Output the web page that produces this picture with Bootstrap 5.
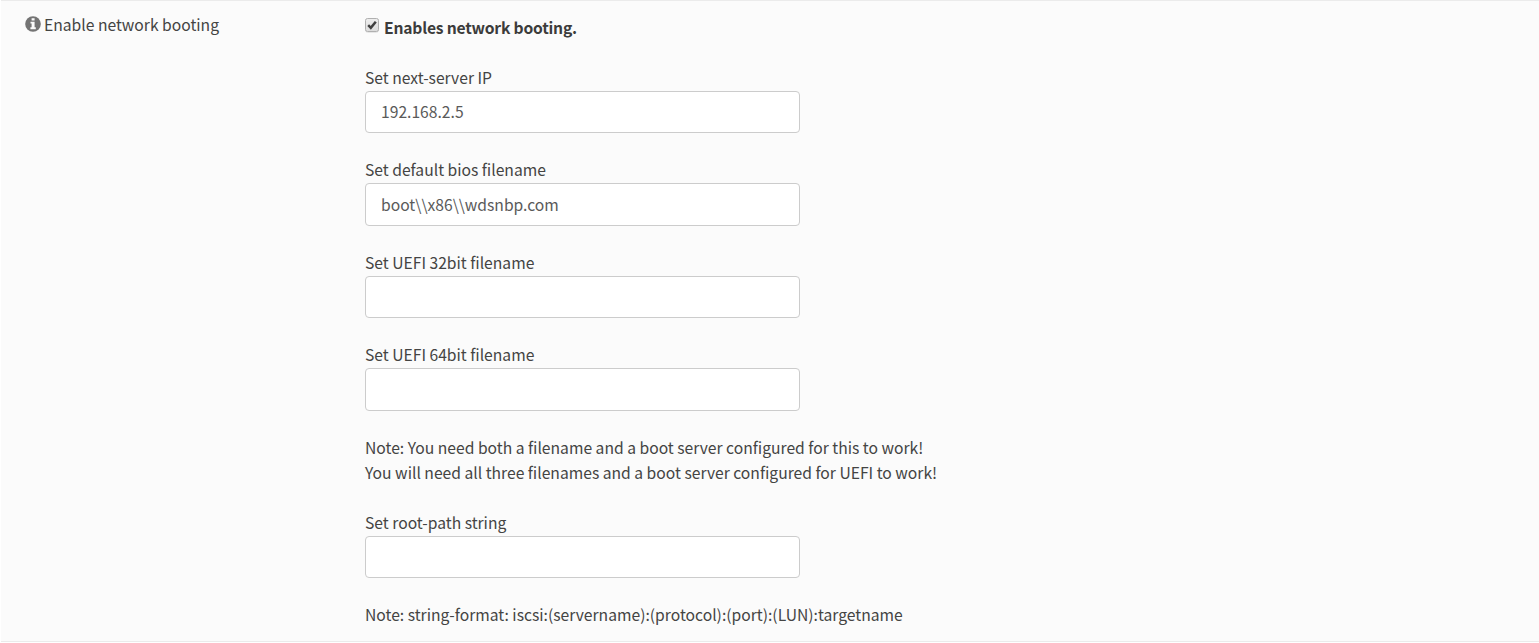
<!DOCTYPE html>
<html lang="en">
<head>
<meta charset="utf-8">
<meta name="viewport" content="width=device-width, initial-scale=1">
<title>Enable network booting</title>
<link href="https://cdn.jsdelivr.net/npm/bootstrap@5.3.0/dist/css/bootstrap.min.css" rel="stylesheet">
<style>
  body { font-family: "Noto Sans CJK SC", sans-serif; font-size: 15.67px; line-height: 25px; color: #444443; background: #fff; }
  .setting { margin-left: 1px; height: 642px; background: #fbfbfb; border-top: 1px solid #ebebeb; border-bottom: 1px solid #ebebeb; }
  .setting-name { width: 364px; padding: 11px 0 0 24px; }
  .setting-name svg { margin: 4px 3px 0 0; }
  .setting-body { padding-top: 14px; }
  .enable-row { height: 25px; margin-bottom: 24.6px; }
  .enable-row strong { letter-spacing: -.21px; color: #3c3c3b; }
  .tick { margin: 3px 5px 0 0; }
  .field { margin-bottom: 23.9px; }
  .field label { padding-bottom: 1.1px; }
  .field .form-control { width: 435px; height: 42.5px; padding: 0 15px; font-size: 15.67px; line-height: 40px; color: #5a5a5a; border: 1px solid #ccc; border-radius: 4px; }
  .notes { margin-bottom: 25px; }
</style>
</head>
<body>
<main class="setting d-flex">
  <div class="setting-name d-flex align-items-start flex-shrink-0">
    <svg class="flex-shrink-0" width="16" height="16" viewBox="0 0 16 16" aria-hidden="true">
      <circle cx="8" cy="8" r="7.8" fill="#747474"/>
      <path fill="#fbfbfb" d="M6.6 2.2h3v2.3h-3zM5.5 5.8h4.1v5.4h1.2v2H5.4v-2h1.2V7.6H5.5z"/>
    </svg>
    <span>Enable network booting</span>
  </div>
  <div class="setting-body">
    <label class="enable-row d-flex align-items-start">
      <svg class="tick flex-shrink-0" width="14" height="15" viewBox="0 0 14 15" aria-hidden="true">
        <defs><linearGradient id="face" x1="0" y1="0" x2="0" y2="1"><stop stop-color="#eee"/><stop offset="1" stop-color="#dcdcdc"/></linearGradient></defs>
        <rect x=".5" y="1" width="13" height="13.3" rx="2" fill="none" stroke="#e2e2e2"/>
        <rect x=".5" y=".5" width="13" height="13" rx="2" fill="url(#face)" stroke="#b0b0b0"/>
        <path d="M3.2 7.2 5.8 9.8 10.8 3.7" fill="none" stroke="#404040" stroke-width="2.5"/>
      </svg>
      <strong>Enables network booting.</strong>
    </label>
    <div class="field"><label class="d-block" for="next">Set next-server IP</label><input id="next" class="form-control" type="text" value="192.168.2.5"></div>
    <div class="field"><label class="d-block" for="bios">Set default bios filename</label><input id="bios" class="form-control" type="text" value="boot\\x86\\wdsnbp.com"></div>
    <div class="field"><label class="d-block" for="u32">Set UEFI 32bit filename</label><input id="u32" class="form-control" type="text"></div>
    <div class="field"><label class="d-block" for="u64">Set UEFI 64bit filename</label><input id="u64" class="form-control" type="text"></div>
    <p class="notes">Note: You need both a filename and a boot server configured for this to work!<br>You will need all three filenames and a boot server configured for UEFI to work!</p>
    <div class="field"><label class="d-block" for="root">Set root-path string</label><input id="root" class="form-control" type="text"></div>
    <p class="mb-0">Note: string-format: iscsi:(servername):(protocol):(port):(LUN):targetname</p>
  </div>
</main>
<script src="https://cdn.jsdelivr.net/npm/bootstrap@5.3.0/dist/js/bootstrap.bundle.min.js"></script>
</body>
</html>
